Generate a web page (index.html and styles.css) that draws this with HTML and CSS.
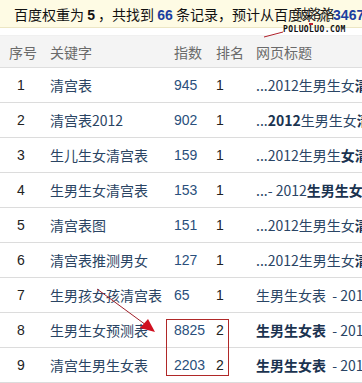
FILE: index.html
```html
<!DOCTYPE html>
<html>
<head>
<meta charset="utf-8">
<link rel="stylesheet" href="styles.css">
</head>
<body>
<div class="page">
  <div class="summary">百度权重为 <b class="k">5</b> ，共找到 <b class="n">66</b> 条记录，预计从百度来流 <b class="n">3467</b> 次</div>
  <table class="grid">
    <colgroup><col class="c1"><col class="c2"><col class="c3"><col class="c4"><col class="c5"></colgroup>
    <thead>
      <tr><th class="no">序号</th><th>关键字</th><th>指数</th><th>排名</th><th>网页标题</th></tr>
    </thead>
    <tbody>
      <tr><td class="no">1</td><td class="kw">清宫表</td><td class="idx">945</td><td class="rk">1</td><td class="tt">...2012生男生女<b>清</b></td></tr>
      <tr><td class="no">2</td><td class="kw">清宫表2012</td><td class="idx">902</td><td class="rk">1</td><td class="tt">...<b>2012</b>生男生女<b>清</b></td></tr>
      <tr><td class="no">3</td><td class="kw">生儿生女清宫表</td><td class="idx">159</td><td class="rk">1</td><td class="tt">...2012生男生<b>女清</b></td></tr>
      <tr><td class="no">4</td><td class="kw">生男生女清宫表</td><td class="idx">153</td><td class="rk">1</td><td class="tt">...- 2012<b>生男生女</b></td></tr>
      <tr><td class="no">5</td><td class="kw">清宫表图</td><td class="idx">151</td><td class="rk">1</td><td class="tt">...2012生男生女<b>清</b></td></tr>
      <tr><td class="no">6</td><td class="kw">清宫表推测男女</td><td class="idx">127</td><td class="rk">1</td><td class="tt">...2012生男生女<b>清</b></td></tr>
      <tr><td class="no">7</td><td class="kw">生男孩女孩清宫表</td><td class="idx">65</td><td class="rk">1</td><td class="tt">生男生女表&nbsp; - 2012</td></tr>
      <tr><td class="no">8</td><td class="kw">生男生女预测表</td><td class="idx">8825</td><td class="rk">2</td><td class="tt"><b>生男生女表</b>&nbsp; - 2012</td></tr>
      <tr><td class="no">9</td><td class="kw">清宫生男生女表</td><td class="idx">2203</td><td class="rk">2</td><td class="tt"><b>生男生女表</b>&nbsp; - 2012</td></tr>
    </tbody>
  </table>
  <div class="mark">
    <span class="mark-cn">破洛洛</span>
    <span class="mark-en">POLUOLUO.COM</span>
  </div>
  <div class="hl-box"></div>
  <svg class="overlay" width="362" height="383" viewBox="0 0 362 383">
    <line x1="264" y1="37" x2="283" y2="32" stroke="#b0202a" stroke-width="1"/>
    <rect x="309" y="23" width="4" height="2" fill="#c02030"/>
    <line x1="97" y1="289" x2="146" y2="325" stroke="#a0202a" stroke-width="1"/>
    <polygon points="155,332 140,328 148,319" fill="#d01020"/>
  </svg>
</div>
</body>
</html>
```
FILE: styles.css
```css
html, body {
  margin: 0;
  padding: 0;
  background: #fff;
}
.page {
  position: relative;
  width: 362px;
  height: 383px;
  overflow: hidden;
  font-family: "Noto Sans CJK SC", "Liberation Sans", sans-serif;
}
.summary {
  box-sizing: border-box;
  width: 480px;
  height: 28px;
  padding: 5px 0 0 14px;
  background: #fefbe4;
  border-bottom: 1px solid #ece6c4;
  font-size: 14px;
  line-height: 18px;
  color: #111;
  white-space: nowrap;
}
.summary b {
  font-family: "Liberation Sans", sans-serif;
  font-weight: bold;
}
.summary .k { color: #111; }
.summary .n { color: #1c3fa0; }
.grid {
  margin-top: 7px;
  border-collapse: collapse;
  table-layout: fixed;
  width: 480px;
  font-size: 14px;
  white-space: nowrap;
}
.c1 { width: 42px; }
.c2 { width: 124px; }
.c3 { width: 42px; }
.c4 { width: 40px; }
.c5 { width: 232px; }
.grid th {
  height: 31px;
  padding: 0 0 0 8px;
  text-align: left;
  font-weight: normal;
  color: #6a6a6a;
  background: #f4f4f4;
  border-top: 1px solid #f0f0f0;
  border-bottom: 1px solid #dedede;
}
.grid th.no { padding-left: 9px; }
.grid td {
  height: 34px;
  padding: 0 0 0 8px;
  border-bottom: 1px solid #dcdcdc;
  overflow: hidden;
}
.grid td.no {
  padding: 0;
  text-align: center;
  color: #222;
  font-family: "Liberation Sans", sans-serif;
}
.kw { color: #2a4463; }
.idx {
  color: #2a4f7c;
  font-family: "Liberation Sans", sans-serif;
}
.rk {
  color: #222;
  font-family: "Liberation Sans", sans-serif;
}
.tt { color: #2a4565; }
.tt b { color: #1b3350; font-weight: bold; }
.mark {
  position: absolute;
  left: 249px;
  top: 3px;
  width: 110px;
  height: 34px;
}
.mark-cn {
  position: absolute;
  left: 47px;
  top: 1px;
  font-size: 13px;
  line-height: 17px;
  color: #151515;
  text-shadow: 0 0 1px #fefbe4;
}
.mark-en {
  position: absolute;
  left: 34px;
  top: 22px;
  font-family: "DejaVu Sans Mono", monospace;
  font-size: 8px;
  font-weight: bold;
  letter-spacing: 0.4px;
  line-height: 9px;
  color: #101010;
}
.hl-box {
  position: absolute;
  left: 166px;
  top: 319px;
  width: 61px;
  height: 55px;
  border: 1px solid #b02828;
}
.overlay {
  position: absolute;
  left: 0;
  top: 0;
  pointer-events: none;
}
```
